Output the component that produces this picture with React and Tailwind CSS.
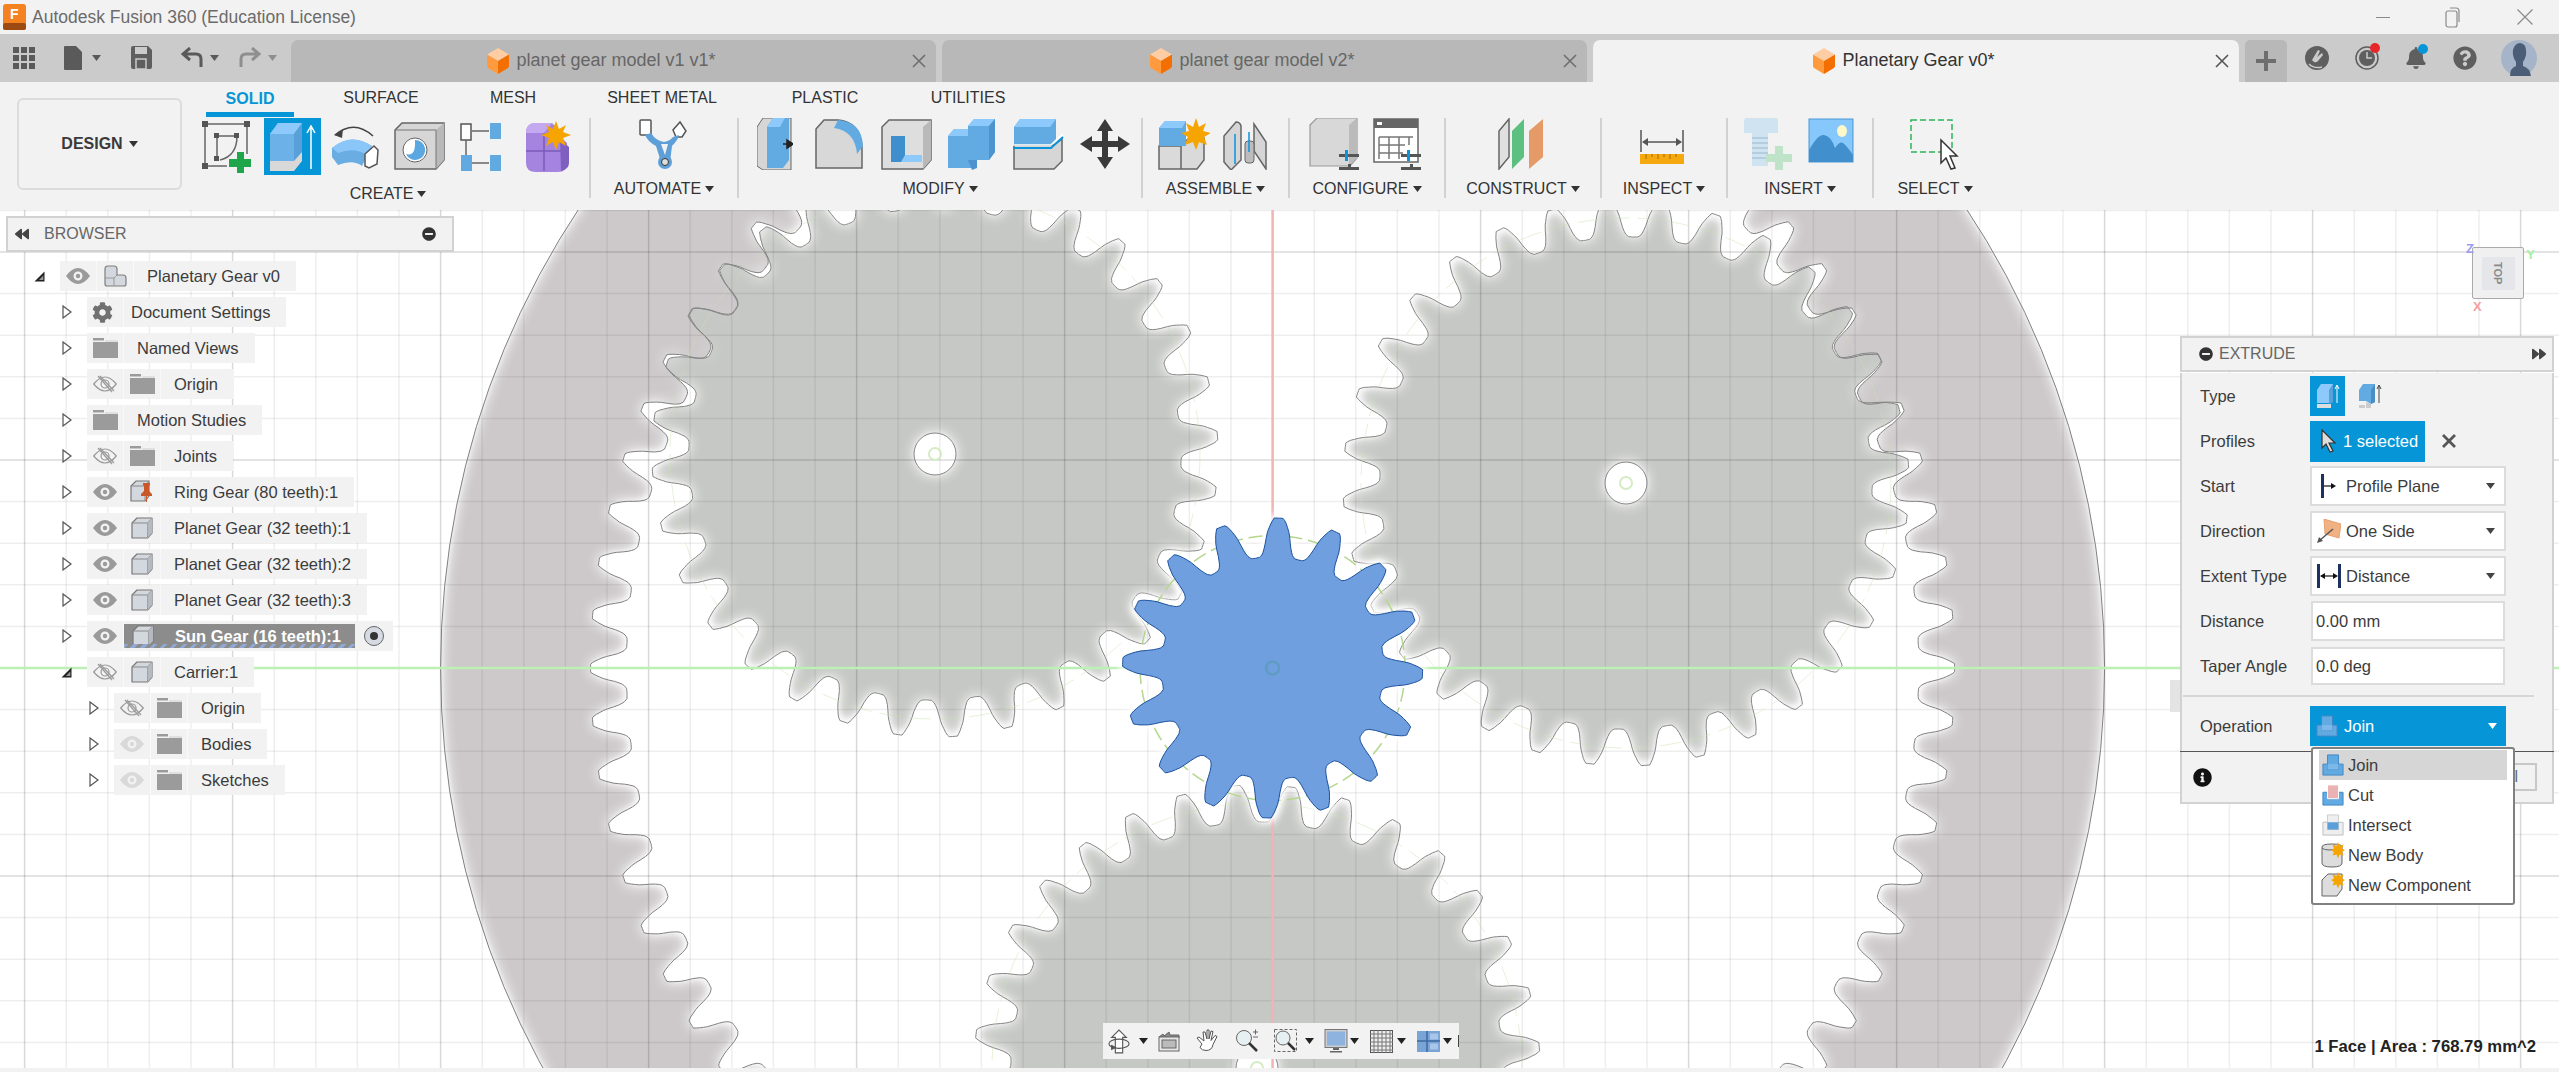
import React from 'react';
import { FaCog, FaInfoCircle, FaMinusCircle, FaBackward, FaForward, FaQuestionCircle, FaBell } from 'react-icons/fa';

// ---- gear geometry for the viewport drawing ----
const PROFILE = [[0, 1], [0.08, 1], [0.13, 0.88], [0.21, 0.62], [0.27, 0.28], [0.33, 0.09], [0.4, 0.01], [0.5, 0]];
const heightAt = (a) => {
  for (let i = 1; i < PROFILE.length; i++) {
    if (a <= PROFILE[i][0]) {
      const [x0, y0] = PROFILE[i - 1];
      const [x1, y1] = PROFILE[i];
      return y0 + ((a - x0) / (x1 - x0)) * (y1 - y0);
    }
  }
  return 0;
};
const gearPath = (cx, cy, n, rIn, rOut, phase) => {
  let d = '';
  for (let k = 0; k < n; k++) {
    for (let s = -0.5; s < 0.5; s += 0.03) {
      const r = rIn + (rOut - rIn) * heightAt(Math.abs(s));
      const t = ((phase + ((k + s) * 360) / n) * Math.PI) / 180;
      d += `${d ? 'L' : 'M'}${(cx + r * Math.cos(t)).toFixed(1)} ${(cy + r * Math.sin(t)).toFixed(1)}`;
    }
  }
  return d + 'Z';
};
const CX = 1272.6;
const CY = 668;
const circlePath = (cx, cy, r) => `M${cx - r} ${cy}a${r} ${r} 0 1 0 ${2 * r} 0a${r} ${r} 0 1 0 ${-2 * r} 0Z`;

const RING = circlePath(CX, CY, 832) + gearPath(CX, CY, 80, 646, 682, 0);
const SUN = gearPath(CX, CY, 16, 111, 150, -87.6);
const PLANETS = [
  { x: 935, y: 454, phase: 7.6 },
  { x: 1626, y: 483, phase: 7.35 },
  { x: 1257, y: 1068, phase: 7 },
].map((p) => ({ ...p, d: gearPath(p.x, p.y, 32, 246, 283, p.phase) + circlePath(p.x, p.y, 21) }));

const verticals = [];
for (let i = -31; i <= 31; i++) verticals.push({ v: CX + i * 41.6, major: i % 5 === 0 });
const horizontals = [];
for (let i = -11; i <= 10; i++) horizontals.push({ v: CY + i * 41.6, major: i % 5 === 0 });

const Viewport = () => (
  <svg width="2559" height="858" viewBox="0 210 2559 858" className="block">
    <defs>
      <filter id="glow" filterUnits="userSpaceOnUse" x="0" y="0" width="2559" height="1300">
        <feGaussianBlur stdDeviation="3" />
      </filter>
      {/* white fade just inside the silhouette of all the parts together */}
      <filter id="edgeFade" filterUnits="userSpaceOnUse" x="0" y="0" width="2559" height="1400" colorInterpolationFilters="sRGB">
        <feGaussianBlur in="SourceAlpha" stdDeviation="7" result="soft" />
        <feComponentTransfer in="soft" result="inv">
          <feFuncA type="table" tableValues="1 1 0.75 0.3 0" />
        </feComponentTransfer>
        <feFlood floodColor="#ffffff" />
        <feComposite in2="inv" operator="in" />
      </filter>
    </defs>
    <rect x="0" y="210" width="2559" height="858" fill="#ffffff" />
    <path d={RING} fill="#cdc9ca" fillRule="evenodd" />
    {PLANETS.map((p) => <path key={p.x} d={p.d} fill="#c6c8c5" fillRule="evenodd" />)}
    <g filter="url(#edgeFade)">
      <path d={RING} fill="#000" fillRule="evenodd" />
      {PLANETS.map((p) => <path key={p.x} d={p.d} fill="#000" fillRule="evenodd" />)}
    </g>
    {verticals.map((l) => (
      <line key={l.v} x1={l.v} x2={l.v} y1="210" y2="1068" stroke="#000" strokeOpacity={l.major ? 0.15 : 0.065} strokeWidth="1.5" />
    ))}
    {horizontals.map((l) => (
      <line key={l.v} x1="0" x2="2559" y1={l.v} y2={l.v} stroke="#000" strokeOpacity={l.major ? 0.15 : 0.065} strokeWidth="1.5" />
    ))}
    <path d={RING} fill="none" stroke="#808080" strokeWidth="1" />
    {PLANETS.map((p) => (
      <g key={p.x}>
        <path d={p.d} fill="none" stroke="#858585" strokeWidth="1" />
        <circle cx={p.x} cy={p.y} r="265" fill="none" stroke="#c9dfae" strokeOpacity="0.45" strokeWidth="1" strokeDasharray="22 8" />
        <circle cx={p.x} cy={p.y} r="6" fill="none" stroke="#d5ebc4" strokeWidth="2" />
      </g>
    ))}
    <line x1="0" x2="2559" y1={CY} y2={CY} stroke="#bdf0b4" strokeWidth="2.5" />
    <line x1={CX} x2={CX} y1="210" y2="1068" stroke="#f4b4b4" strokeWidth="2.5" />
    <path d={SUN} fill="none" stroke="#ffffff" strokeWidth="8" filter="url(#glow)" />
    <circle cx={CX} cy={CY} r="132.5" fill="none" stroke="#b4d78d" strokeWidth="1.5" strokeDasharray="14 6" />
    <path d={SUN} fill="#6f9fde" stroke="#1c519e" strokeWidth="1" />
    <circle cx={CX} cy={CY} r="6.5" fill="none" stroke="#5f9cc4" strokeWidth="2.5" />
  </svg>
);

// ---- small shared icons ----
const Caret = ({ color = '#444', w = 9, h = 6 }) => (
  <svg width={w} height={h} viewBox="0 0 9 6" className="shrink-0"><path d="M0 0h9L4.5 6z" fill={color} /></svg>
);

const TabCube = () => (
  <svg width="22" height="26" viewBox="0 0 22 26" className="shrink-0">
    <path d="M11 0l11 6.5L11 13 0 6.5z" fill="#ffcda3" />
    <path d="M0 6.5L11 13v13L1 20q-1-1-1-2z" fill="#ff9b3e" />
    <path d="M22 6.5L11 13v13l10-6q1-1 1-2z" fill="#f46f02" />
  </svg>
);

const TabClose = ({ color = '#6e6e6e' }) => (
  <svg width="14" height="14" viewBox="0 0 14 14" className="shrink-0"><path d="M1 1l12 12M13 1L1 13" stroke={color} strokeWidth="1.6" /></svg>
);

const ClosedArrow = () => (
  <svg width="10" height="14" viewBox="0 0 10 14" className="shrink-0"><path d="M1 1l8 6-8 6z" fill="#fff" stroke="#555" strokeWidth="1.2" /></svg>
);
const OpenArrow = () => (
  <svg width="11" height="11" viewBox="0 0 11 11" className="shrink-0"><path d="M0.5 10.5L10.5 0.5v10z" fill="#222" /><path d="M5 9L9.3 4.5V9z" fill="#999" /></svg>
);

const Eye = ({ color = '#9a9a9a' }) => (
  <svg width="24" height="16" viewBox="0 0 24 16">
    <path fillRule="evenodd" d="M0 8Q6 0 12 0t12 8q-6 8-12 8T0 8zm12-4.5a4.5 4.5 0 1 0 0 9 4.5 4.5 0 0 0 0-9z" fill={color} />
    <circle cx="12" cy="8" r="2.2" fill={color} />
  </svg>
);
const EyeOff = () => (
  <svg width="24" height="18" viewBox="0 0 24 18" fill="none" stroke="#9a9a9a" strokeWidth="1.2">
    <path d="M0.7 9Q6.5 2 12 2t11.3 7Q17.5 16 12 16T0.7 9z" />
    <circle cx="12" cy="9" r="4" />
    <path d="M5 1l14 16M7 1l14 15" />
  </svg>
);
const Folder = () => (
  <svg width="25" height="20" viewBox="0 0 25 20"><path d="M0 0h11v2.5H0zM0 4h25v16H0z" fill="#9b9b9b" /><path d="M12 2h13v2H12z" fill="#9b9b9b" opacity="0.2" /></svg>
);
const Body = () => (
  <svg width="22" height="22" viewBox="0 0 22 22">
    <path d="M1 6l5-5h15v15l-4.5 5H1z" fill="#d3d7de" stroke="#777" strokeWidth="1.2" strokeLinejoin="round" />
    <path d="M1 6h15.5v15M16.500 6L21 1" fill="none" stroke="#8a8a8a" strokeWidth="1" />
    <path d="M16.500 6L21 1v15l-4.500 5z" fill="#b5bac2" />
  </svg>
);
const RootBody = () => (
  <svg width="23" height="22" viewBox="0 0 23 22">
    <path d="M1 4q0-3 3-3h6q3 0 3 3v6h6q3 0 3 3v6q0 2-2 2H3q-2 0-2-2z" fill="#d3d7de" stroke="#7f7f7f" strokeWidth="1.2" />
    <path d="M13 10l-3 3H1M10 13v8" fill="none" stroke="#9a9a9a" />
  </svg>
);
const PinnedBody = () => (
  <svg width="24" height="24" viewBox="0 0 24 24">
    <path d="M1 6l5-5h13v15l-4 5H1z" fill="#d3d7de" stroke="#777" strokeWidth="1.2" />
    <path d="M1 6h14v15M15 6l4-5" fill="none" stroke="#8a8a8a" />
    <path d="M13 3h7v2l-1 1v5l3 3v2h-5v6h-1v-6h-5v-2l3-3V6l-1-1z" fill="#c8582a" />
  </svg>
);
const SmallIcon = ({ children, w = 24, h = 24, vb = '0 0 24 24' }) => (
  <svg width={w} height={h} viewBox={vb} className="shrink-0">{children}</svg>
);

// ---- ribbon icons, each drawn in a 52x52 box ----
const R = ({ children, w = 52, h = 52 }) => <svg width={w} height={h} viewBox="0 0 52 52">{children}</svg>;

const SketchIcon = () => (
  <R>
    <g fill="none" stroke="#666" strokeWidth="1.500">
      <path d="M3 3h42M3 3v42M3 45h22M45 3v30" />
      <path d="M15 15h20M15 15v22M35 15q0 20-17 24" />
    </g>
    <g fill="#555"><rect x="0" y="0" width="6" height="6" /><rect x="42" y="0" width="6" height="6" /><rect x="0" y="42" width="6" height="6" /><rect x="12" y="12" width="5" height="5" /><rect x="32" y="12" width="5" height="5" /><rect x="12" y="35" width="5" height="5" /></g>
    <path d="M35 31h7v7h7v8h-7v6h-7v-6h-8v-8h8z" fill="#1fa64a" />
  </R>
);
const ExtrudeIcon = () => (
  <div className="w-[57px] h-[57px] bg-[#0696d7] flex items-center justify-center">
    <svg width="48" height="50" viewBox="0 0 48 50">
      <path d="M2 12l8-11h24v30l-8 11H2z" fill="#6cb2e8" />
      <path d="M2 12h24l8-11H10z" fill="#8dcafb" />
      <path d="M26 12l8-11v30l-8 11z" fill="#5aa0d8" />
      <path d="M2 39h24l8-9v9l-8 10H2z" fill="#d8d8d8" />
      <path d="M43 47V6M39 11l4-7 4 7" stroke="#fff" strokeWidth="1.500" fill="none" />
    </svg>
  </div>
);
const RevolveIcon = () => (
  <R>
    <path d="M5 14q19-16 38 1" fill="none" stroke="#444" strokeWidth="1.500" />
    <path d="M4 14l9-6-1 9z" fill="#444" />
    <path d="M2 27q19-16 40-2l-7 14-3 6q-9-7-24-1l-6-8z" fill="#69ade3" />
    <path d="M2 27q19-16 40-2l-7 8q-11-7-27-1z" fill="#8bc6f8" />
    <path d="M35 33l9-8 4 4-1 14-8 4-4-2z" fill="#fff" stroke="#555" strokeWidth="1.500" />
  </R>
);
const HoleIcon = () => (
  <R>
    <path d="M1 9l7-7h42v37l-8 9H1z" fill="#d6d6d6" stroke="#666" strokeWidth="1.500" />
    <path d="M42 9L50 2v37l-8 9z" fill="#b9b9b9" />
    <path d="M1 9h41v39" fill="none" stroke="#777" />
    <circle cx="21" cy="29" r="12" fill="#fff" stroke="#666" />
    <path d="M21 19a10 10 0 1 1-9 14q10 3 9-14z" fill="#5ba7e0" />
  </R>
);
const PatternIcon = () => (
  <R>
    <rect x="3" y="3" width="10" height="16" fill="#fff" stroke="#555" strokeWidth="1.500" />
    <rect x="32" y="2" width="11" height="16" fill="#61a9e1" />
    <rect x="3" y="34" width="11" height="16" fill="#61a9e1" />
    <rect x="32" y="34" width="11" height="16" fill="#61a9e1" />
    <path d="M14 10h17M8 19v15M14 42h17" stroke="#666" strokeWidth="1.500" fill="none" />
  </R>
);
const BoxSparkIcon = () => (
  <R>
    <path d="M4 12Q4 3 12 2h18l6 6v5l9 9v20q0 9-9 9H14Q4 51 4 42z" fill="#a584e0" />
    <path d="M4 12Q4 3 12 2h18l-8 10H4z" fill="#c4a8f0" />
    <path d="M22 12v38M4 30h41" stroke="#7b5bb8" strokeWidth="1.500" />
    <path d="M38 18l9 8v16q0 6-8 8z" fill="#7f5fc0" />
    <path d="M34 0l3 8 7-4-3 7 8 3-8 3 3 8-7-4-3 8-3-8-7 4 3-8-8-3 8-3-3-7 7 4z" fill="#f5a400" />
  </R>
);
const AutomateIcon = () => (
  <R>
    <rect x="2" y="2" width="11" height="15" rx="1" fill="#fff" stroke="#555" strokeWidth="1.500" />
    <path d="M42 4l6 9-4 6h-6l-3-7z" fill="#fff" stroke="#555" strokeWidth="1.500" />
    <path d="M7 17q3 7 11 11l5 16h9l2-16q6-6 7-11l-6 2q-3 4-9 5-8-1-13-9z" fill="#5f9fd8" />
    <path d="M23 26h7l-3 11z" fill="#f2f2f2" />
    <circle cx="27" cy="44" r="7" fill="#5f9fd8" /><circle cx="27" cy="44" r="3.500" fill="#ddd" stroke="#333" />
  </R>
);
const ModifyPress = () => (
  <svg width="36" height="52" viewBox="0 0 36 52">
    <path d="M0 9l6-9h28v52H6L0 48z" fill="#d6d6d6" stroke="#666" strokeWidth="1" />
    <path d="M10 9l6-9h16v42l-6 8H10z" fill="#62aae2" />
    <path d="M10 9h13l5-9H16z" fill="#8dcafb" />
    <path d="M26 26h8M30 22l6 4-6 4z" fill="#222" stroke="#222" strokeWidth="1.500" />
  </svg>
);
const FilletIcon = () => (
  <R>
    <path d="M1 11l8-9h14q22 2 24 26v22H1z" fill="#d8d8d8" stroke="#666" strokeWidth="1.500" />
    <path d="M23 2q24 2 25 26l-6 8q-2-23-23-26z" fill="#62aae2" />
  </R>
);
const ShellIcon = () => (
  <R>
    <path d="M1 9l7-7h42v40l-8 9H1z" fill="#dedede" stroke="#666" strokeWidth="1.500" />
    <path d="M42 9l8-7v40l-8 9z" fill="#b9b9b9" />
    <path d="M10 18h14v19h17v7H10z" fill="#3f8fcd" />
    <path d="M24 37l-4 7h21V37z" fill="#8dcafb" />
  </R>
);
const CombineIcon = () => (
  <R>
    <path d="M1 18l6-7h14V8l6-7h21v33l-6 8H30v8H1z" fill="#62aae2" />
    <path d="M21 8l6-7h21l-6 7z" fill="#8dcafb" />
    <path d="M1 18l6-7h14v7z" fill="#8dcafb" />
    <path d="M42 8l6-7v33l-6 8z" fill="#4d93cd" />
    <path d="M21 42h9v8l-5 2z" fill="#4d93cd" />
  </R>
);
const SplitIcon = () => (
  <R>
    <path d="M1 27h40l8-6v22l-8 8H1z" fill="#d6d6d6" stroke="#666" strokeWidth="1.500" />
    <path d="M1 9l6-8h36v20l-6 6H1z" fill="#62aae2" /><path d="M1 9l6-8h36l-6 8z" fill="#8dcafb" />
    <path d="M0 30h38l12-11" stroke="#0a94dc" strokeWidth="2" fill="none" />
    <path d="M0 27h38l12-11" stroke="#fff" strokeWidth="1.500" fill="none" />
  </R>
);
const MoveIcon = () => (
  <R>
    <path d="M26 1l8 12h-5v10h10v-5l12 8-12 8v-5H29v10h5l-8 12-8-12h5V29H13v5L1 26l12-8v5h10V13h-5z" fill="#3a3a3a" />
  </R>
);
const NewCompIcon = () => (
  <R>
    <path d="M1 28h22v23H1zM23 28l8-8h15v22l-7 9H23z" fill="#dadada" stroke="#666" strokeWidth="1.500" />
    <path d="M1 10l6-7h21v25H1z" fill="#62aae2" /><path d="M1 10l6-7h21l-4 7z" fill="#8dcafb" />
    <path d="M38 0l3 9 7-4-3 8 8 2-7 4 3 8-8-3-3 8-3-8-8 3 3-8-7-4 8-2-3-8 7 4z" fill="#f5a400" />
  </R>
);
const JointIcon = () => (
  <R>
    <path d="M2 44V18L14 4q4 0 5 4v34l-10 10z" fill="#d5d5d5" stroke="#666" strokeWidth="1.500" />
    <path d="M32 6l12 18v27l-12-18z" fill="#d5d5d5" stroke="#666" strokeWidth="1.500" />
    <rect x="23" y="23" width="9" height="22" rx="3" fill="#bcbcbc" stroke="#666" />
    <path d="M13 16v30M27 14v20" stroke="#0a94dc" strokeWidth="1.500" />
  </R>
);
const Sliders = () => (
  <g><path d="M0 0h20v3H0zM0 13h20v3H0z" fill="#555" /><path d="M6-4h3v11H6z" fill="#0a94dc" /><path d="M9 10h3v11H9z" fill="#555" /></g>
);
const ConfigBoxIcon = () => (
  <R>
    <path d="M1 7l7-7h40v40l-7 8H1z" fill="#d8d8d8" stroke="#999" strokeWidth="1.200" />
    <path d="M40 7l8-7v40l-8 8z" fill="#bbb" />
    <g transform="translate(30 36)"><Sliders /></g>
  </R>
);
const ConfigTableIcon = () => (
  <R>
    <rect x="1" y="1" width="44" height="43" fill="#fff" stroke="#666" strokeWidth="1.500" />
    <rect x="1" y="1" width="44" height="9" fill="#666" /><rect x="4" y="4" width="5" height="3" fill="#fff" />
    <path d="M6 19h34M6 27h26M6 35h24M6 19v22M16 19v22M26 19v22M36 19v8" stroke="#777" strokeWidth="1.500" fill="none" />
    <g transform="translate(28 36)"><Sliders /></g>
  </R>
);
const ConstructIcon = () => (
  <R>
    <path d="M2 13L12 1v38L2 51z" fill="#e0e0e0" stroke="#666" strokeWidth="1.500" />
    <path d="M15 51V13L27 1v38z" fill="#5cc080" />
    <path d="M32 51V13L46 1v38z" fill="#e59a68" />
  </R>
);
const MeasureIcon = () => (
  <R>
    <path d="M3 12v22M45 12v22M5 24h38" stroke="#555" strokeWidth="1.500" fill="none" />
    <path d="M4 24l6-4v8zM44 24l-6-4v8z" fill="#555" />
    <rect x="2" y="36" width="44" height="10" fill="#f5a90f" />
    <path d="M8 36v5M14 36v3M20 36v5M26 36v3M32 36v5M38 36v3" stroke="#a36d00" strokeWidth="1" />
  </R>
);
const BoltIcon = () => (
  <R>
    <path d="M2 3q0-3 3-3h28q3 0 3 3v12H26v33H10V15H2z" fill="#d0e3f0" />
    <path d="M10 20h16M10 25h16M10 30h16M10 35h16M10 40h16" stroke="#b4cee0" strokeWidth="2" />
    <path d="M33 28h8v8h9v8h-9v8h-8v-8h-9v-8h9z" fill="#bfe3c8" />
  </R>
);
const PictureIcon = () => (
  <R>
    <rect x="3" y="1" width="44" height="43" fill="#86c8fc" stroke="#4a97d4" />
    <path d="M3 32q9-16 15-15 7 1 11 13 5-7 8-5t10 12v7H3z" fill="#418fcd" />
    <ellipse cx="36" cy="13" rx="5" ry="6" fill="#fdf8c8" />
  </R>
);
const SelectIcon = () => (
  <R>
    <rect x="2" y="2" width="41" height="32" fill="none" stroke="#2cb55a" strokeWidth="1.500" strokeDasharray="6 3" />
    <path d="M32 22v23l5-5 5 11 4-1-5-12h7z" fill="#fff" stroke="#333" strokeWidth="1.500" />
  </R>
);

const RIBBON_TABS = [
  { label: 'SOLID', w: 'w-[88px]', active: true },
  { label: 'SURFACE', w: 'w-[174px]' },
  { label: 'MESH', w: 'w-[90px]' },
  { label: 'SHEET METAL', w: 'w-[208px]' },
  { label: 'PLASTIC', w: 'w-[118px]' },
  { label: 'UTILITIES', w: 'w-[168px]' },
];

const GROUPS = [
  { label: 'CREATE', w: 'w-[404px]', cell: 'w-[64px]', icons: [SketchIcon, ExtrudeIcon, RevolveIcon, HoleIcon, PatternIcon, BoxSparkIcon] },
  { label: 'AUTOMATE', w: 'w-[148px]', cell: 'w-[64px]', icons: [AutomateIcon] },
  { label: 'MODIFY', w: 'w-[404px]', cell: 'w-[66px]', icons: [ModifyPress, FilletIcon, ShellIcon, CombineIcon, SplitIcon, MoveIcon] },
  { label: 'ASSEMBLE', w: 'w-[147px]', cell: 'w-[64px]', icons: [NewCompIcon, JointIcon] },
  { label: 'CONFIGURE', w: 'w-[156px]', cell: 'w-[64px]', icons: [ConfigBoxIcon, ConfigTableIcon] },
  { label: 'CONSTRUCT', w: 'w-[156px]', cell: 'w-[64px]', icons: [ConstructIcon] },
  { label: 'INSPECT', w: 'w-[126px]', cell: 'w-[64px]', icons: [MeasureIcon] },
  { label: 'INSERT', w: 'w-[146px]', cell: 'w-[64px]', icons: [BoltIcon, PictureIcon] },
  { label: 'SELECT', w: 'w-[122px]', cell: 'w-[64px]', icons: [SelectIcon], last: true },
];

const TitleBar = () => (
  <div className="h-[34px] bg-[#f2f2f2] flex items-center pl-[3px] shrink-0">
    <svg width="23" height="26" viewBox="0 0 23 26" className="shrink-0">
      <rect width="23" height="26" rx="3" fill="#f58220" />
      <rect y="19" width="23" height="7" rx="2" fill="#9c4a12" />
      <text x="7" y="15" fontSize="14" fontWeight="700" fill="#fff" fontFamily="Liberation Sans">F</text>
    </svg>
    <span className="ml-[6px] text-[17.5px] text-[#6b6b6b]">Autodesk Fusion 360 (Education License)</span>
    <div className="ml-auto flex items-center">
      <div className="w-[14px] h-px bg-[#8a8a8a]" />
      <svg width="16" height="22" viewBox="0 0 16 22" className="ml-[55px]" fill="none" stroke="#8a8a8a" strokeWidth="1.200"><rect x="1" y="5" width="11" height="16" rx="2" /><path d="M5 2h6q3 0 3 3v11" /></svg>
      <svg width="16" height="16" viewBox="0 0 16 16" className="ml-[56px] mr-[26px]"><path d="M0.500 0.500l15 15M15.500 0.500l-15 15" stroke="#8a8a8a" strokeWidth="1.200" /></svg>
    </div>
  </div>
);

const DocTab = ({ title, width, active, closeColor }) => (
  <div className={`${width} h-[42px] rounded-t-[7px] flex items-center relative shrink-0 ${active ? 'bg-[#f2f2f2]' : 'bg-[#b8b8b8]'}`}>
    <div className="flex-1 flex items-center justify-center pb-px">
      <TabCube />
      <span className={`ml-[7px] text-[18px] ${active ? 'text-[#333]' : 'text-[#666]'}`}>{title}</span>
    </div>
    <div className="mr-[10px]"><TabClose color={closeColor} /></div>
  </div>
);

const TabsBar = () => (
  <div className="h-[48px] bg-[#cbcbcb] flex items-end shrink-0">
    <div className="w-[291px] h-[48px] flex items-center pl-[13px] pb-[1px]">
      <svg width="22" height="22" viewBox="0 0 22 22" fill="#5a5a5a">
        <rect width="6" height="6" /><rect x="8" width="6" height="6" /><rect x="16" width="6" height="6" />
        <rect y="8" width="6" height="6" /><rect x="8" y="8" width="6" height="6" /><rect x="16" y="8" width="6" height="6" />
        <rect y="16" width="6" height="6" /><rect x="8" y="16" width="6" height="6" /><rect x="16" y="16" width="6" height="6" />
      </svg>
      <svg width="18" height="24" viewBox="0 0 18 24" className="ml-[29px]"><path d="M0 1q0-1 1-1h11l6 6v17q0 1-1 1H1q-1 0-1-1z" fill="#5a5a5a" /></svg>
      <div className="ml-[10px]"><Caret color="#5a5a5a" /></div>
      <svg width="22" height="23" viewBox="0 0 22 23" className="ml-[29px]"><path d="M1 2q0-2 2-2h15l4 4v17q0 2-2 2H3q-2 0-2-2z" fill="#5f5f5f" /><rect x="5" y="1" width="12" height="7" fill="#cbcbcb" /><rect x="6" y="13" width="10" height="10" fill="none" stroke="#cbcbcb" strokeWidth="1.500" /></svg>
      <svg width="22" height="22" viewBox="0 0 22 22" className="ml-[29px]" fill="none"><path d="M20 20V12q0-5-5-5H4M9 1L2 7l7 6" stroke="#5a5a5a" strokeWidth="3" /></svg>
      <div className="ml-[7px]"><Caret color="#5a5a5a" /></div>
      <svg width="22" height="22" viewBox="0 0 22 22" className="ml-[20px]" fill="none"><path d="M2 20V12q0-5 5-5h11M13 1l7 6-7 6" stroke="#8f8f8f" strokeWidth="3" /></svg>
      <div className="ml-[7px]"><Caret color="#8f8f8f" /></div>
    </div>
    <div className="flex gap-[6px]">
      <DocTab title="planet gear model v1 v1*" width="w-[645px]" closeColor="#6e6e6e" />
      <DocTab title="planet gear model v2*" width="w-[645px]" closeColor="#6e6e6e" />
      <DocTab title="Planetary Gear v0*" width="w-[646px]" active closeColor="#555" />
    </div>
    <div className="ml-[6px] w-[42px] h-[42px] bg-[#b8b8b8] rounded-t-[5px] flex items-center justify-center">
      <svg width="20" height="20" viewBox="0 0 20 20"><path d="M8 0h4v8h8v4h-8v8H8v-8H0V8h8z" fill="#6e6e6e" /></svg>
    </div>
    <div className="h-[48px] flex items-center pl-[18px] gap-[26px]">
      <svg width="24" height="26" viewBox="0 0 24 26">
        <circle cx="12" cy="13" r="12" fill="#5f5f5f" />
        <path d="M7 15l6-10 2 1-3 6 5-4 1 2-5 6q-2 2-4 1z" fill="#cbcbcb" />
        <path d="M4 19q5 5 13 3" stroke="#cbcbcb" strokeWidth="1.500" fill="none" />
      </svg>
      <div className="relative">
        <svg width="24" height="24" viewBox="0 0 24 24" fill="none">
          <circle cx="12" cy="12" r="11" stroke="#5f5f5f" strokeWidth="1.500" />
          <circle cx="12" cy="12" r="8" fill="#5f5f5f" />
          <path d="M12 6v6h5" stroke="#cbcbcb" strokeWidth="1.500" />
        </svg>
        <div className="absolute -top-[3px] -right-[1px] w-[10px] h-[10px] rounded-full bg-[#e8262a]" />
      </div>
      <div className="relative">
        <FaBell size={22} color="#5f5f5f" />
        <div className="absolute -top-[3px] -right-[1px] w-[10px] h-[10px] rounded-full bg-[#0696d7]" />
      </div>
      <FaQuestionCircle size={24} color="#5f5f5f" />
      <svg width="36" height="36" viewBox="0 0 36 36" className="-ml-[2px]">
        <circle cx="18" cy="18" r="18" fill="#a5b4c8" />
        <path d="M9 36q0-8 6-10v-4q-4-6-3-12 2-7 7-7 6 1 6 7 1 6-3 12v4q7 2 8 10z" fill="#4c5d77" />
      </svg>
    </div>
  </div>
);

const Ribbon = () => (
  <div className="h-[128px] bg-[#f2f2f2] flex shrink-0 relative z-10">
    <div className="ml-[17px] mt-[16px] w-[165px] h-[92px] rounded-[6px] border-2 border-[#dcdcdc] flex items-center justify-center gap-[6px]">
      <span className="text-[16px] font-bold text-[#3a3a3a]">DESIGN</span>
      <Caret color="#333" />
    </div>
    <div className="ml-[5px] flex flex-col">
      <div className="h-[36px] pl-[19px] flex">
        {RIBBON_TABS.map((t) => (
          <div key={t.label} className={`${t.w} h-[35px] flex items-center justify-center text-[16px] ${t.active ? 'text-[#0696d7] font-bold border-b-[5px] border-[#0696d7] pt-[3px]' : 'text-[#333] pb-[3px]'}`}>
            {t.label}
          </div>
        ))}
      </div>
      <div className="flex h-[80px]">
        {GROUPS.map((g) => (
          <div key={g.label} className={`${g.w} shrink-0 flex flex-col ${g.last ? '' : 'border-r-2 border-[#d2d2d2]'}`}>
            <div className="h-[57px] flex justify-center items-center">
              {g.icons.map((Icon, i) => (
                <div key={i} className={`${g.cell} flex items-center justify-center`}><Icon /></div>
              ))}
            </div>
            <div className="flex-1 flex items-center justify-center gap-[4px] pt-[7px] text-[16px] text-[#333]">
              {g.label}
              <Caret color="#333" />
            </div>
          </div>
        ))}
      </div>
    </div>
  </div>
);

const Seg = ({ children, pl = 'justify-center' }) => (
  <div className={`w-[37px] h-full flex items-center ${pl} border-r border-[#f9f9f9] shrink-0`}>{children}</div>
);

const TREE = [
  { d: 0, open: true, eye: 'on', icon: <RootBody />, label: 'Planetary Gear v0' },
  { d: 1, icon: <FaCog size={21} color="#707070" />, label: 'Document Settings', tight: true },
  { d: 1, icon: <Folder />, label: 'Named Views' },
  { d: 1, eye: 'off', icon: <Folder />, label: 'Origin' },
  { d: 1, icon: <Folder />, label: 'Motion Studies' },
  { d: 1, eye: 'off', icon: <Folder />, label: 'Joints' },
  { d: 1, eye: 'on', icon: <PinnedBody />, label: 'Ring Gear (80 teeth):1' },
  { d: 1, eye: 'on', icon: <Body />, label: 'Planet Gear (32 teeth):1' },
  { d: 1, eye: 'on', icon: <Body />, label: 'Planet Gear (32 teeth):2' },
  { d: 1, eye: 'on', icon: <Body />, label: 'Planet Gear (32 teeth):3' },
  { d: 1, eye: 'on', icon: <Body />, label: 'Sun Gear (16 teeth):1', selected: true },
  { d: 1, open: true, eye: 'off', icon: <Body />, label: 'Carrier:1' },
  { d: 2, eye: 'off', icon: <Folder />, label: 'Origin' },
  { d: 2, eye: 'dim', icon: <Folder />, label: 'Bodies' },
  { d: 2, eye: 'dim', icon: <Folder />, label: 'Sketches' },
];
const INDENT = { 0: 'pl-[34px]', 1: 'pl-[61px]', 2: 'pl-[88px]' };

const TreeRow = ({ row }) => (
  <div className={`h-[30px] flex items-center ${INDENT[row.d]}`}>
    <div className="w-[11px] flex justify-center">{row.open ? <OpenArrow /> : <ClosedArrow />}</div>
    <div className="ml-[15px] h-full flex items-center bg-[#f2f2f2] text-[16.5px] text-[#3c3c3c]">
      {row.eye && (
        <Seg>
          {row.eye === 'on' && <Eye />}
          {row.eye === 'off' && <EyeOff />}
          {row.eye === 'dim' && <Eye color="#d9d9d9" />}
        </Seg>
      )}
      {row.selected ? (
        <>
          <div className="relative h-[24px] w-[231px] bg-[#8c8c8c] flex items-center">
            <div className="w-[37px] flex justify-center"><Body /></div>
            <span className="ml-[14px] font-bold text-white">{row.label}</span>
            <div className="absolute bottom-0 left-0 right-0 h-[4px] bg-[repeating-linear-gradient(135deg,#8fa8d6_0px,#8fa8d6_3px,#8c8c8c_3px,#8c8c8c_7px)]" />
          </div>
          <div className="w-[38px] flex justify-center">
            <div className="w-[20px] h-[20px] rounded-full border border-[#666] bg-[#d6dbe3] flex items-center justify-center">
              <div className="w-[8px] h-[8px] rounded-full bg-[#333]" />
            </div>
          </div>
        </>
      ) : (
        <>
          <Seg pl={row.tight ? 'justify-start pl-[5px]' : 'justify-center'}>{row.icon}</Seg>
          <span className={`${row.tight ? 'ml-[7px]' : 'ml-[13px]'} pr-[16px] whitespace-nowrap`}>{row.label}</span>
        </>
      )}
    </div>
  </div>
);

const BrowserPanel = () => (
  <div className="absolute left-[6px] top-[6px] w-[448px]">
    <div className="h-[36px] bg-[#f2f2f2] border-2 border-[#d2d2d2] flex items-center pl-[7px] pr-[16px] text-[16px] text-[#666]">
      <FaBackward size={14} color="#444" />
      <span className="ml-[15px]">BROWSER</span>
      <FaMinusCircle size={14} color="#333" className="ml-auto" />
    </div>
    <div className="-ml-[6px] mt-[9px] flex flex-col gap-[6px]">
      {TREE.map((row, i) => <TreeRow key={i} row={row} />)}
    </div>
  </div>
);

const SelectBox = ({ icon, label }) => (
  <div className="w-[196px] h-[40px] bg-white border-2 border-[#dcdcdc] flex items-center text-[16.5px] text-[#3c3c3c]">
    <div className="w-[33px] flex justify-center shrink-0">{icon}</div>
    <span className="ml-[1px]">{label}</span>
    <div className="ml-auto mr-[9px]"><Caret color="#444" /></div>
  </div>
);

const FieldRow = ({ label, children }) => (
  <div className="h-[40px] flex items-center">
    <div className="w-[110px] text-[16.5px] text-[#3c3c3c] shrink-0">{label}</div>
    {children}
  </div>
);

const JoinIcon = () => (
  <SmallIcon w={22} h={22}>
    <path d="M1 11h22v12H1z" fill="#62aae2" stroke="#3f86c4" strokeWidth="1" />
    <path d="M6 1h12v16H6z" fill="#62aae2" stroke="#3f86c4" strokeWidth="1" />
    <path d="M6 11h12v6H6z" fill="#7cb9ea" />
  </SmallIcon>
);

const DROPDOWN = [
  { label: 'Join', active: true, icon: <JoinIcon /> },
  { label: 'Cut', icon: <SmallIcon w={22} h={22}><path d="M1 9h22v14H1z" fill="#62aae2" stroke="#3f86c4" /><path d="M6 1h12v15H6z" fill="#eab2b2" stroke="#fff" /><path d="M5 9h14v8H5z" fill="none" /></SmallIcon> },
  { label: 'Intersect', icon: <SmallIcon w={22} h={22}><path d="M1 9h22v14H1z" fill="#eee" stroke="#bbb" /><path d="M6 1h12v16H6z" fill="#eee" stroke="#ccc" /><path d="M6 9h12v8H6z" fill="#5a9fd8" /></SmallIcon> },
  { label: 'New Body', icon: <SmallIcon w={24} h={26} vb="0 0 24 26"><path d="M1 5q0-3 10-3t10 3v16q0 4-10 4T1 21z" fill="#ddd" stroke="#666" /><path d="M1 6q4 4 20 0" fill="none" stroke="#666" /><path d="M17 0l1.500 4 4-1.500-1.500 4 3 1.500-3 2 1.500 3.500-4-1-1.500 4-1.500-4-4 1 1.500-3.500-3-2 3-1.500-1.500-4 4 1.500z" fill="#f5a400" /></SmallIcon> },
  { label: 'New Component', icon: <SmallIcon w={24} h={26} vb="0 0 24 26"><path d="M1 8l6-6h14v15l-5 7H1z" fill="#ddd" stroke="#666" /><path d="M17 0l1.500 4 4-1.500-1.500 4 3 1.500-3 2 1.500 3.500-4-1-1.500 4-1.500-4-4 1 1.500-3.500-3-2 3-1.500-1.500-4 4 1.500z" fill="#f5a400" /></SmallIcon> },
];

const ExtrudePanel = () => (
  <div className="absolute left-[2180px] top-[126px] w-[374px]">
    <div className="h-[36px] bg-[#f2f2f2] border-2 border-[#d2d2d2] flex items-center pl-[17px] pr-[6px] text-[16px] text-[#666]">
      <FaMinusCircle size={14} color="#333" />
      <span className="ml-[6px]">EXTRUDE</span>
      <FaForward size={14} color="#444" className="ml-auto" />
    </div>
    <div className="mt-px h-[431px] bg-[#f2f2f2] border-2 border-t-0 border-[#d2d2d2] relative">
      <div className="pl-[18px] pt-[3px] flex flex-col gap-[5px]">
        <FieldRow label="Type">
          <div className="w-[35px] h-[40px] bg-[#0696d7] flex items-center justify-center">
            <svg width="24" height="26" viewBox="0 0 24 26"><path d="M1 7l4-6h12v18l-4 1H1z" fill="#8dcafb" /><path d="M13 7l4-6v18l-4 2z" fill="#5aa0d8" /><path d="M1 21h14v4H1z" fill="#ddd" /><path d="M21 20V3M19 6l2-4 2 4" stroke="#fff" fill="none" /></svg>
          </div>
          <div className="ml-[13px]">
            <svg width="24" height="26" viewBox="0 0 24 26"><path d="M1 7l4-6h12v18l-4 2-5-3H1z" fill="#62aae2" /><path d="M13 7l4-6v18l-4 2z" fill="#4a8cc4" /><path d="M1 22h6v3H1zM8 19l5 2v4H8z" fill="#ccc" /><path d="M21 20V3M19 6l2-4 2 4" stroke="#444" fill="none" /></svg>
          </div>
        </FieldRow>
        <FieldRow label="Profiles">
          <div className="w-[115px] h-[41px] bg-[#0696d7] flex items-center pl-[11px] text-[16.5px] text-white">
            <svg width="16" height="24" viewBox="0 0 16 24"><path d="M1 1v18l4-4 4 8 3-1-4-8h6z" fill="#ddd" stroke="#333" strokeWidth="1.200" /></svg>
            <span className="ml-[6px]">1 selected</span>
          </div>
          <svg width="14" height="14" viewBox="0 0 14 14" className="ml-[17px]"><path d="M1 1l12 12M13 1L1 13" stroke="#555" strokeWidth="2.800" /></svg>
        </FieldRow>
        <FieldRow label="Start">
          <SelectBox label="Profile Plane" icon={<svg width="16" height="24" viewBox="0 0 16 24"><rect x="0" width="3" height="24" fill="#1b3160" /><path d="M3 12h9" stroke="#111" strokeWidth="1.200" /><path d="M10 9l5 3-5 3z" fill="#111" /></svg>} />
        </FieldRow>
        <FieldRow label="Direction">
          <SelectBox label="One Side" icon={<svg width="24" height="24" viewBox="0 0 24 24"><path d="M7 0l17 5-2 14-14-4z" fill="#f0b183" stroke="#e29660" strokeWidth="0.800" /><path d="M16 10L2 22" stroke="#555" strokeWidth="1.500" /><path d="M0 24l2-6 4 4z" fill="#555" /></svg>} />
        </FieldRow>
        <FieldRow label="Extent Type">
          <SelectBox label="Distance" icon={<svg width="24" height="24" viewBox="0 0 24 24"><rect x="0" width="3" height="24" fill="#1b3160" /><rect x="21" width="3" height="24" fill="#1b3160" /><path d="M5 12h14" stroke="#111" strokeWidth="1.200" /><path d="M3 12l5-3v6zM21 12l-5-3v6z" fill="#111" /></svg>} />
        </FieldRow>
        <FieldRow label="Distance">
          <div className="w-[194px] h-[40px] ml-px bg-white border-2 border-[#dcdcdc] flex items-center pl-[3px] text-[16.5px] text-[#3c3c3c]">0.00 mm</div>
        </FieldRow>
        <FieldRow label="Taper Angle">
          <div className="w-[194px] h-[38px] ml-px bg-white border-2 border-[#dcdcdc] flex items-center pl-[3px] text-[16.5px] text-[#3c3c3c]">0.0 deg</div>
        </FieldRow>
      </div>
      <div className="ml-[1px] mt-[9px] w-[351px] h-[2px] bg-[#d6d6d6]" />
      <div className="pl-[18px] mt-[9px]">
        <FieldRow label="Operation">
          <div className="w-[196px] h-[40px] bg-[#0696d7] flex items-center text-[16.5px] text-white">
            <div className="w-[33px] flex justify-center"><JoinIcon /></div>
            <span className="ml-[1px]">Join</span>
            <div className="ml-auto mr-[9px]"><Caret color="#fff" /></div>
          </div>
        </FieldRow>
      </div>
      <div className="mt-[5px] -mx-[2px] h-px bg-[#555]" />
      <div className="h-[50px] flex items-center pl-[11px] pr-[15px]">
        <FaInfoCircle size={19} color="#111" />
        <div className="ml-auto w-[70px] h-[28px] border-2 border-[#c8c8c8] flex items-center justify-end pr-[17px] text-[16px] text-[#5e6f80]">Cancel</div>
      </div>
    </div>
    <div className="absolute left-[131px] top-[411px] w-[204px] h-[158px] bg-white border-2 border-[#808080] rounded-[3px] pt-[1px] px-[6px] z-10">
      {DROPDOWN.map((item) => (
        <div key={item.label} className={`h-[30px] flex items-center text-[16.5px] text-[#3c3c3c] ${item.active ? 'bg-[#d6d6d6]' : ''}`}>
          <div className="w-[28px] flex justify-center shrink-0">{item.icon}</div>
          <span className="ml-[1px]">{item.label}</span>
        </div>
      ))}
    </div>
  </div>
);

const ViewCube = () => (
  <div className="absolute left-[2472px] top-[37px] w-[52px] h-[52px] bg-[#f0f0f0] border border-[#aaaaaa] rounded-[2px] flex items-center justify-center">
    <div className="w-[33px] h-[33px] bg-[#e5e6ea] flex items-center justify-center">
      <span className="rotate-90 text-[11px] font-bold text-[#8a8a8a]">TOP</span>
    </div>
    <span className="absolute -left-[7px] -top-[9px] text-[13px] font-bold text-[#9a9aee]">Z</span>
    <span className="absolute -right-[12px] top-[-3px] text-[13px] font-bold text-[#a6f0a6]">Y</span>
    <span className="absolute left-[0px] -bottom-[18px] text-[13px] font-bold text-[#f5a0a0]">X</span>
  </div>
);

const Nav = ({ children, cls = '' }) => <div className={`shrink-0 flex items-center justify-center ${cls}`}>{children}</div>;

const NavBar = () => (
  <div className="absolute left-[1103px] top-[813px] w-[356px] h-[36px] bg-[#f2f2f2] flex items-center pl-[5px] overflow-hidden">
    <Nav>
      <svg width="22" height="26" viewBox="0 0 24 26" fill="none" stroke="#555" strokeWidth="1.200"><path d="M8 26V9H4l8-8 8 8h-4v17z" fill="#fff" /><ellipse cx="12" cy="16" rx="11" ry="5" /><path d="M4 18l4 2-4 2z" fill="#555" /></svg>
    </Nav>
    <Nav cls="ml-[9px]"><Caret color="#222" /></Nav>
    <Nav cls="ml-[10px]">
      <svg width="22" height="22" viewBox="0 0 22 22" fill="#e8e8e8" stroke="#666"><path d="M1 7l4-3 1 2 5-4 1 3 9 0v3z" fill="#888" /><rect x="1" y="7" width="20" height="14" /><rect x="4" y="10" width="14" height="8" fill="#bbb" /></svg>
    </Nav>
    <Nav cls="ml-[16px]">
      <svg width="24" height="24" viewBox="0 0 24 24" fill="#fff" stroke="#555" strokeWidth="1"><path d="M6 15L1 9l2-1 5 4-1-9 2 0 2 7V1h2v9l2-8 2 .5-2 9 4-5 2 1-4 8q-1 6-7 6-4 0-6-3z" /></svg>
    </Nav>
    <Nav cls="ml-[15px]">
      <svg width="24" height="24" viewBox="0 0 24 24" fill="none"><circle cx="9" cy="9" r="7.500" fill="#e6eff2" stroke="#666" /><path d="M14 14l8 8" stroke="#333" strokeWidth="2.500" /><path d="M18 3h5M20.500 0.500v5M18 8h5" stroke="#666" /></svg>
    </Nav>
    <Nav cls="ml-[15px]">
      <svg width="24" height="24" viewBox="0 0 24 24" fill="none"><rect x="0.500" y="0.500" width="22" height="22" stroke="#666" strokeDasharray="3 2" /><circle cx="9" cy="9" r="7" fill="#e6eff2" stroke="#666" /><path d="M14 14l7 7" stroke="#333" strokeWidth="2.500" /></svg>
    </Nav>
    <Nav cls="ml-[7px]"><Caret color="#222" /></Nav>
    <Nav cls="ml-[10px]">
      <svg width="24" height="24" viewBox="0 0 24 24"><rect x="1" y="0.500" width="22" height="18" fill="#c9ccd0" stroke="#777" /><rect x="3" y="2.500" width="18" height="14" fill="#8fb3df" /><path d="M9 19h6v2H9zM6 22h12v1.500H6z" fill="#666" /></svg>
    </Nav>
    <Nav cls="ml-[2px]"><Caret color="#222" /></Nav>
    <Nav cls="ml-[11px]">
      <svg width="23" height="23" viewBox="0 0 23 23"><rect x="0.500" y="0.500" width="22" height="22" fill="#eee" stroke="#555" /><path d="M4 0v23M8 0v23M12 0v23M16 0v23M20 0v23M0 4h23M0 8h23M0 12h23M0 16h23M0 20h23" stroke="#777" strokeWidth="1" /></svg>
    </Nav>
    <Nav cls="ml-[4px]"><Caret color="#222" /></Nav>
    <Nav cls="ml-[11px]">
      <svg width="23" height="21" viewBox="0 0 23 21"><rect width="23" height="21" fill="#7ba4d6" /><path d="M10 0v21M0 10h23" stroke="#3d6ba3" strokeWidth="1.500" /><rect x="13" y="2.500" width="8" height="6" fill="#a9c6ea" /><rect x="13" y="12.500" width="8" height="6" fill="#a9c6ea" /></svg>
    </Nav>
    <Nav cls="ml-[3px]"><Caret color="#222" /></Nav>
    <div className="ml-[6px] w-[2px] h-[12px] bg-[#444] shrink-0" />
  </div>
);

export default function App() {
  return (
    <div className="w-[2559px] h-[1072px] overflow-hidden flex flex-col bg-[#f2f2f2] [font-family:'Liberation_Sans',Arial,sans-serif]">
      <TitleBar />
      <TabsBar />
      <Ribbon />
      <div className="relative h-[858px] shrink-0 overflow-hidden">
        <Viewport />
        <BrowserPanel />
        <ExtrudePanel />
        <ViewCube />
        <NavBar />
        {/* sash next to the command panel */}
        <div className="absolute left-[2170px] top-[470px] w-[10px] h-[32px] bg-[#e4e4e4]" />
        <div className="absolute right-[23px] top-[824px] text-[16.7px] font-bold text-[#222]">1 Face | Area : 768.79 mm^2</div>
      </div>
    </div>
  );
}
